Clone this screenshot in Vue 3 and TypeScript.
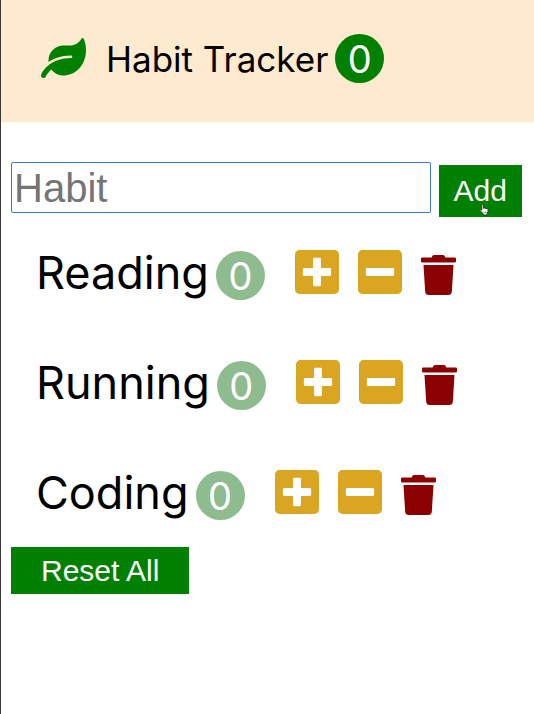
<script setup lang="ts">
import { computed, ref } from 'vue'

interface Habit {
  id: number
  name: string
  count: number
}

const habits = ref<Habit[]>([
  { id: 1, name: 'Reading', count: 0 },
  { id: 2, name: 'Running', count: 0 },
  { id: 3, name: 'Coding', count: 0 },
])
const draft = ref('')
const active = computed(() => habits.value.filter((h) => h.count > 0).length)

function add(): void {
  const name = draft.value.trim()
  if (!name) return
  habits.value.push({ id: Date.now(), name, count: 0 })
  draft.value = ''
}

function decrement(habit: Habit): void {
  habit.count = Math.max(0, habit.count - 1)
}

function remove(id: number): void {
  habits.value = habits.value.filter((h) => h.id !== id)
}

function reset(): void {
  habits.value.forEach((h) => (h.count = 0))
}
</script>

<template>
  <div class="app">
    <header class="navbar">
      <svg class="leaf" viewBox="0 0 576 512" aria-hidden="true">
        <path d="M546.2 9.7c-5.6-12.5-21.6-13-28.3-1.2C486.9 62.4 431.4 96 368 96h-80C182 96 96 182 96 288c0 7 .8 13.7 1.5 20.5C161.3 262.8 253.4 224 384 224c8.8 0 16 7.2 16 16s-7.2 16-16 16C132.6 256 26 410.1 2.4 468c-6.6 16.3 1.2 34.9 17.5 41.6 16.4 6.8 35-1.1 41.8-17.3 1.5-3.6 20.9-47.9 71.9-90.6 32.4 43.9 94 85.8 174.9 77.2C465.5 467.5 576 326.7 576 154.3c0-50.2-10.8-102.2-29.8-144.6z" />
      </svg>
      <h1 class="title">Habit Tracker</h1>
      <span class="badge total">{{ active }}</span>
    </header>

    <main class="content">
      <form class="add-form" @submit.prevent="add">
        <input v-model="draft" class="add-input" type="text" placeholder="Habit" aria-label="Habit" />
        <button class="add-button" type="submit">
          Add
          <svg class="pointer" viewBox="0 0 20 22" aria-hidden="true">
            <path d="M5 2.5c0-2 3-2 3 0V8c1-1 2.5-.8 3 .3 1-.8 2.5-.4 2.8.7 1.2-.6 2.7 0 2.7 1.5V14l-1.5 3v3H7.5v-2L2 12c-1-1.8 1-2.8 2.2-1.5L5 11.5z" />
            <path class="fingers" d="M9 14v3M11.5 14v3M14 14v3" />
          </svg>
        </button>
      </form>

      <ul class="habits">
        <li v-for="habit in habits" :key="habit.id" class="habit">
          <span class="name">{{ habit.name }}</span>
          <span class="badge count">{{ habit.count }}</span>
          <div class="actions">
            <button class="icon-button" type="button" aria-label="Increase" @click="habit.count++">
              <svg class="square" viewBox="0 32 448 448" aria-hidden="true">
                <path d="M400 32H48C21.5 32 0 53.5 0 80v352c0 26.5 21.5 48 48 48h352c26.5 0 48-21.5 48-48V80c0-26.5-21.5-48-48-48zm-32 252c0 6.6-5.4 12-12 12h-92v92c0 6.6-5.4 12-12 12h-56c-6.6 0-12-5.4-12-12v-92H92c-6.6 0-12-5.4-12-12v-56c0-6.6 5.4-12 12-12h92v-92c0-6.6 5.4-12 12-12h56c6.6 0 12 5.4 12 12v92h92c6.6 0 12 5.4 12 12v56z" />
              </svg>
            </button>
            <button class="icon-button" type="button" aria-label="Decrease" @click="decrement(habit)">
              <svg class="square" viewBox="0 32 448 448" aria-hidden="true">
                <path d="M400 32H48C21.5 32 0 53.5 0 80v352c0 26.5 21.5 48 48 48h352c26.5 0 48-21.5 48-48V80c0-26.5-21.5-48-48-48zM92 296c-6.6 0-12-5.4-12-12v-56c0-6.6 5.4-12 12-12h264c6.6 0 12 5.4 12 12v56c0 6.6-5.4 12-12 12H92z" />
              </svg>
            </button>
            <button class="icon-button" type="button" aria-label="Delete" @click="remove(habit.id)">
              <svg class="trash" viewBox="0 0 448 512" aria-hidden="true">
                <path d="M432 32H312l-9.4-18.7A24 24 0 0 0 281.1 0H166.8a23.72 23.72 0 0 0-21.4 13.3L136 32H16A16 16 0 0 0 0 48v32a16 16 0 0 0 16 16h416a16 16 0 0 0 16-16V48a16 16 0 0 0-16-16zM53.2 467a48 48 0 0 0 47.9 45h245.8a48 48 0 0 0 47.9-45L416 128H32z" />
              </svg>
            </button>
          </div>
        </li>
      </ul>

      <button class="reset-button" type="button" @click="reset">Reset All</button>
    </main>
  </div>
</template>

<style>
body {
  margin: 0;
  background: #fff;
}
</style>

<style scoped>
.app {
  box-sizing: border-box;
  min-height: 100vh;
  border-left: 1px solid #3b3838;
  color: #000;
  font-family: Inter, 'Liberation Sans', sans-serif;
}

.navbar {
  display: flex;
  align-items: center;
  padding: 33px 40px 39px;
  background: #fdeacf;
}

.leaf {
  width: 45px;
  height: 40px;
  fill: green;
}

.title {
  margin: 0 7px 0 20px;
  padding-top: 2px;
  font-size: 35px;
  font-weight: 400;
  line-height: 48px;
}

.badge {
  display: flex;
  align-items: center;
  justify-content: center;
  box-sizing: border-box;
  width: 49px;
  height: 49px;
  padding-top: 2px;
  border-radius: 50%;
  color: #fff;
  font-size: 38px;
  line-height: 47px;
}

.total {
  background: green;
}

.count {
  margin-left: 7px;
  background: #8fbc8f;
}

.content {
  padding: 40px 12px 0 10px;
}

.add-form {
  display: flex;
  align-items: flex-start;
  gap: 8px;
}

.add-input {
  box-sizing: border-box;
  flex: 1;
  min-width: 0;
  height: 51px;
  padding: 1px 2px 0;
  border: 1px solid #3f78c8;
  border-radius: 2px;
  outline: none;
  background: #fff;
  font-family: 'Liberation Sans', Arial, sans-serif;
  font-size: 40px;
}

.add-input::placeholder {
  color: #757575;
  opacity: 1;
}

.add-button,
.reset-button {
  border: 0;
  background: green;
  color: #fff;
  font-family: 'Liberation Sans', Arial, sans-serif;
  font-size: 30px;
}

.add-button {
  position: relative;
  height: 52px;
  margin-top: 3px;
  padding: 0 15px;
}

.pointer {
  position: absolute;
  left: 40px;
  bottom: 1px;
  width: 11px;
  height: 12px;
  fill: #fff;
  stroke: #222;
  stroke-width: 1.5;
}

.fingers {
  stroke-width: 1;
}

.habits {
  margin: 0;
  padding: 28px 0 0 25px;
  list-style: none;
}

.habit {
  display: flex;
  align-items: center;
  height: 60px;
  margin-bottom: 50px;
}

.habit:last-child {
  margin-bottom: 22px;
}

.name {
  padding-bottom: 4px;
  font-size: 45px;
  line-height: 56px;
}

.actions {
  display: flex;
  align-items: center;
  gap: 19px;
  margin-left: 30px;
}

.icon-button {
  display: flex;
  padding: 0;
  border: 0;
  background: none;
}

.square {
  width: 44px;
  height: 44px;
  margin-bottom: 6px;
  fill: goldenrod;
}

.trash {
  width: 35px;
  height: 40px;
  fill: darkred;
}

.reset-button {
  height: 47px;
  padding: 0 30px;
}
</style>
